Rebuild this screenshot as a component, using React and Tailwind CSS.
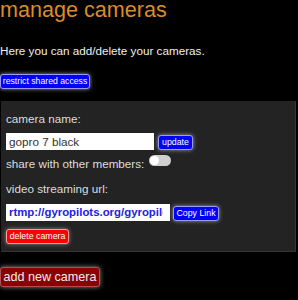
import { useState } from "react";

export default function App() {
  const [name, setName] = useState("gopro 7 black");
  const [shared, setShared] = useState(false);
  const url = "rtmp://gyropilots.org/gyropilots/live/gopro7black";

  return (
    <div className="min-h-screen bg-black font-['Liberation_Sans',Arial,sans-serif] text-[11.7px] overflow-hidden">
      <h1 className="h-[20px] leading-[20px] text-[21.6px] font-normal text-[#db8b2b] whitespace-nowrap">
        manage cameras
      </h1>
      <p className="mt-[24px] h-[13px] leading-[13px] text-[#eeeeee] whitespace-nowrap">
        Here you can add/delete your cameras.
      </p>

      <button className="mt-[17px] block h-[15px] w-[90px] bg-[#0000ff] border border-[#9a9aff] rounded-[3px] shadow-[0_0_4px_#9a9a9a] text-white text-[8.7px] leading-[13px] px-0 whitespace-nowrap">
        restrict shared access
      </button>

      {/* Camera card */}
      <div className="mt-[12px] ml-[1px] w-[295px] bg-[#232323] border border-[#343434] border-l-0 border-t-0 pt-[11px] pb-[7px] pl-[5px]">
        <div className="h-[13px] leading-[13px] text-[#dddddd] whitespace-nowrap">camera name:</div>

        <div className="mt-[8px] flex items-end gap-[4px]">
          <input
            className="h-[17px] w-[148px] bg-white text-[#333] text-[11.7px] px-[3px] outline-none border-0"
            value={name}
            onChange={(e) => setName(e.target.value)}
          />
          <button className="h-[15px] w-[35px] bg-[#0000ff] border border-[#9a9aff] rounded-[3px] shadow-[0_0_4px_#9a9a9a] text-white text-[8.8px] leading-[13px] px-0">
            update
          </button>
        </div>

        <div className="flex items-start">
          <div className="mt-[7px] h-[13px] leading-[13px] text-[#dddddd] whitespace-nowrap">
            share with other members:
          </div>
          <button
            onClick={() => setShared(!shared)}
            className="mt-[5px] ml-[5px] h-[11px] w-[22px] rounded-full bg-[#cfcfcf] p-[1px] flex"
          >
            <span className="h-[9px] w-[9px] rounded-full bg-white"></span>
          </button>
        </div>

        <div className="mt-[12px] h-[13px] leading-[13px] text-[#dddddd] whitespace-nowrap">
          video streaming url:
        </div>

        <div className="mt-[9px] flex items-end gap-[3px]">
          <input
            readOnly
            className="h-[17px] w-[164px] bg-white text-[#2222dd] font-bold text-[11.4px] pl-[3px] pr-[7px] outline-none border-0"
            value={url}
          />
          <button className="h-[15px] w-[46px] bg-[#0000ff] border border-[#9a9aff] rounded-[3px] shadow-[0_0_4px_#9a9a9a] text-white text-[8.8px] leading-[13px] px-0 whitespace-nowrap">
            Copy Link
          </button>
        </div>

        <button className="mt-[8px] block h-[15px] w-[63px] bg-[#ff0000] border border-[#ff9a9a] rounded-[3px] shadow-[0_0_4px_#8a8a8a] text-white text-[8.8px] leading-[13px] px-0 whitespace-nowrap">
          delete camera
        </button>
      </div>

      <button className="mt-[15px] block h-[20px] w-[100px] bg-[#8b0000] border border-[#b05050] rounded-[3px] shadow-[0_0_5px_#8a8a8a] text-[#eeeeee] text-[12.6px] leading-[18px] px-0 whitespace-nowrap">
        add new camera
      </button>
    </div>
  );
}
